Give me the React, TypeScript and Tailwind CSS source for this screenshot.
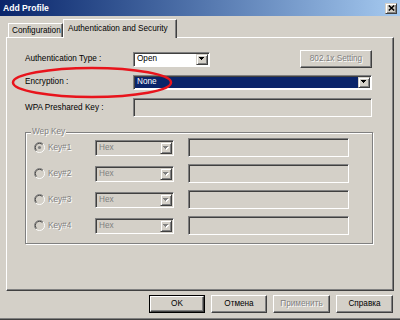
import React from 'react';

const sunken =
  'border border-t-[#808080] border-l-[#808080] border-r-white border-b-white shadow-[inset_1px_1px_0_#404040]';
const raised =
  'border border-t-white border-l-white border-r-[#404040] border-b-[#404040] shadow-[inset_-1px_-1px_0_#808080]';
const raisedSmall =
  'border border-t-[#d4d0c8] border-l-[#d4d0c8] border-r-[#404040] border-b-[#404040] shadow-[inset_1px_1px_0_#fff,inset_-1px_-1px_0_#808080]';
const disabledText = 'text-[#808080] [text-shadow:1px_1px_0_#fff]';

const Arrow = ({ disabled }: { disabled?: boolean }) => (
  <svg width="6" height="4" viewBox="0 0 6 4" shapeRendering="crispEdges">
    {disabled && (
      <g fill="#fff">
        <rect x="1" y="1" width="5" height="1" />
        <rect x="2" y="2" width="3" height="1" />
        <rect x="3" y="3" width="1" height="1" />
      </g>
    )}
    <g fill={disabled ? '#808080' : '#000'}>
      <rect x="0" y="0" width="5" height="1" />
      <rect x="1" y="1" width="3" height="1" />
      <rect x="2" y="2" width="1" height="1" />
    </g>
  </svg>
);

interface ComboProps {
  className: string;
  value: string;
  disabled?: boolean;
  selected?: boolean;
}

const Combo = ({ className, value, disabled, selected }: ComboProps) => (
  <div className={`flex shrink-0 p-[1px] ${sunken} ${disabled ? 'bg-[#d4d0c8]' : 'bg-white'} ${className}`}>
    <div
      className={`flex-1 flex items-center pl-[2px] ${
        selected ? 'bg-[#0a246a] text-white' : disabled ? 'text-[#808080]' : 'text-black'
      }`}
    >
      {value}
    </div>
    <div className={`w-[12px] flex items-center justify-center bg-[#d4d0c8] ${raisedSmall}`}>
      <Arrow disabled={disabled} />
    </div>
  </div>
);

const Radio = ({ checked }: { checked?: boolean }) => (
  <svg width="11" height="11" viewBox="0 0 12 12" className="shrink-0">
    <circle cx="6" cy="6" r="5.5" fill="#d4d0c8" />
    <path d="M2.1 9.9A5.5 5.5 0 0 1 9.9 2.1" stroke="#808080" fill="none" />
    <path d="M9.9 2.1A5.5 5.5 0 0 1 2.1 9.9" stroke="#fff" fill="none" />
    <path d="M2.8 9.2A4.5 4.5 0 0 1 9.2 2.8" stroke="#404040" fill="none" />
    {checked && <circle cx="6" cy="6" r="1.7" fill="#808080" />}
  </svg>
);

const keys = ['Key#1', 'Key#2', 'Key#3', 'Key#4'];

const Button = ({ label, disabled, width }: { label: string; disabled?: boolean; width: string }) => (
  <div className={`${width} h-[18px] flex items-center justify-center bg-[#d4d0c8] ${raised} ${disabled ? disabledText : 'text-black'}`}>
    {label}
  </div>
);

export default function App() {
  return (
    <div className="relative w-[400px] h-[320px] bg-[#d4d0c8] flex flex-col overflow-hidden font-['Liberation_Sans',Arial,sans-serif] text-[8.2px] leading-[10px] text-black">
      {/* title bar */}
      <div className="h-[16px] shrink-0 flex items-center justify-between pl-[3px] pr-[3px] bg-linear-to-r from-[#0a246a] to-[#a6caf0]">
        <span className="text-white font-bold text-[8.6px]">Add Profile</span>
        <div className={`w-[12px] h-[11px] flex items-center justify-center bg-[#d4d0c8] ${raisedSmall}`}>
          <svg width="7" height="6" viewBox="0 0 7 6">
            <path d="M0.8 0.5L6.2 5.5M6.2 0.5L0.8 5.5" stroke="#000" strokeWidth="1.5" />
          </svg>
        </div>
      </div>

      {/* tabs */}
      <div className="relative z-10 mt-[3px] pl-[8px] h-[18px] flex items-end">
        <div className="w-[55px] h-[14px] pl-[3px] pt-[2px] whitespace-nowrap border-t border-l border-r border-t-white border-l-white border-r-[#404040] shadow-[inset_-1px_0_0_#808080]">
          Configuration
        </div>
        <div className="-mb-[1px] w-[114px] h-[19px] pl-[4px] pt-[4px] whitespace-nowrap bg-[#d4d0c8] border-t border-l border-r border-t-white border-l-white border-r-[#404040] shadow-[inset_-1px_0_0_#808080]">
          Authentication and Security
        </div>
      </div>

      {/* panel */}
      <div className="ml-[6px] w-[388px] h-[254px] shrink-0 pl-[18px] pt-[12px] border border-t-white border-l-white border-r-[#404040] border-b-[#404040] shadow-[inset_-1px_-1px_0_#808080]">
        <div className="flex items-center h-[18px]">
          <div className="w-[108px]">Authentication Type :</div>
          <Combo className="w-[77px] h-[15px]" value="Open" />
          <div className={`ml-[90px] w-[72px] h-[18px] flex items-center justify-center ${raised} ${disabledText}`}>
            802.1x Setting
          </div>
        </div>

        <div className="mt-[5px] flex items-center h-[18px]">
          <div className="w-[108px]">Encryption :</div>
          <Combo className="w-[239px] h-[15px]" value="None" selected />
        </div>

        <div className="mt-[7px] flex items-center h-[19px]">
          <div className="w-[108px]">WPA Preshared Key :</div>
          <div className={`w-[239px] h-[19px] bg-[#d4d0c8] ${sunken}`} />
        </div>

        <fieldset className="mt-[10px] w-[348px] pl-[8px] pt-[1px] pb-[8px] border border-[#808080] shadow-[inset_1px_1px_0_#fff,1px_1px_0_#fff]">
          <legend className={`relative -ml-[3px] px-[1px] bg-[#d4d0c8] ${disabledText}`}>Wep Key</legend>
          <div className="flex flex-col gap-[7px]">
            {keys.map((k, i) => (
              <div key={k} className="flex items-center h-[19px]">
                <div className="w-[61px] flex items-center gap-[3px]">
                  <Radio checked={i === 0} />
                  <span className={disabledText}>{k}</span>
                </div>
                <Combo className="w-[79px] h-[16px]" value="Hex" disabled />
                <div className={`ml-[14px] w-[161px] h-[19px] bg-[#d4d0c8] ${sunken}`} />
              </div>
            ))}
          </div>
        </fieldset>
      </div>

      {/* buttons */}
      <div className="mt-[4px] pr-[7px] flex justify-end gap-[6px]">
        <div className="w-[56px] h-[18px] border border-black">
          <div className={`h-full flex items-center justify-center ${raised}`}>OK</div>
        </div>
        <Button label="Отмена" width="w-[56px]" />
        <Button label="Применить" width="w-[57px]" disabled />
        <Button label="Справка" width="w-[57px]" />
      </div>

      <div className="flex-1" />
      <div className="h-[2px] shrink-0 bg-[#404040] border-t border-[#808080]" />

      {/* red highlight ellipse */}
      <svg className="absolute left-[11px] top-[66px] z-20 pointer-events-none" width="162" height="33" viewBox="0 0 162 33">
        <ellipse cx="81" cy="16.5" rx="79" ry="14.5" fill="none" stroke="#e8141c" strokeWidth="2.5" />
      </svg>
    </div>
  );
}
